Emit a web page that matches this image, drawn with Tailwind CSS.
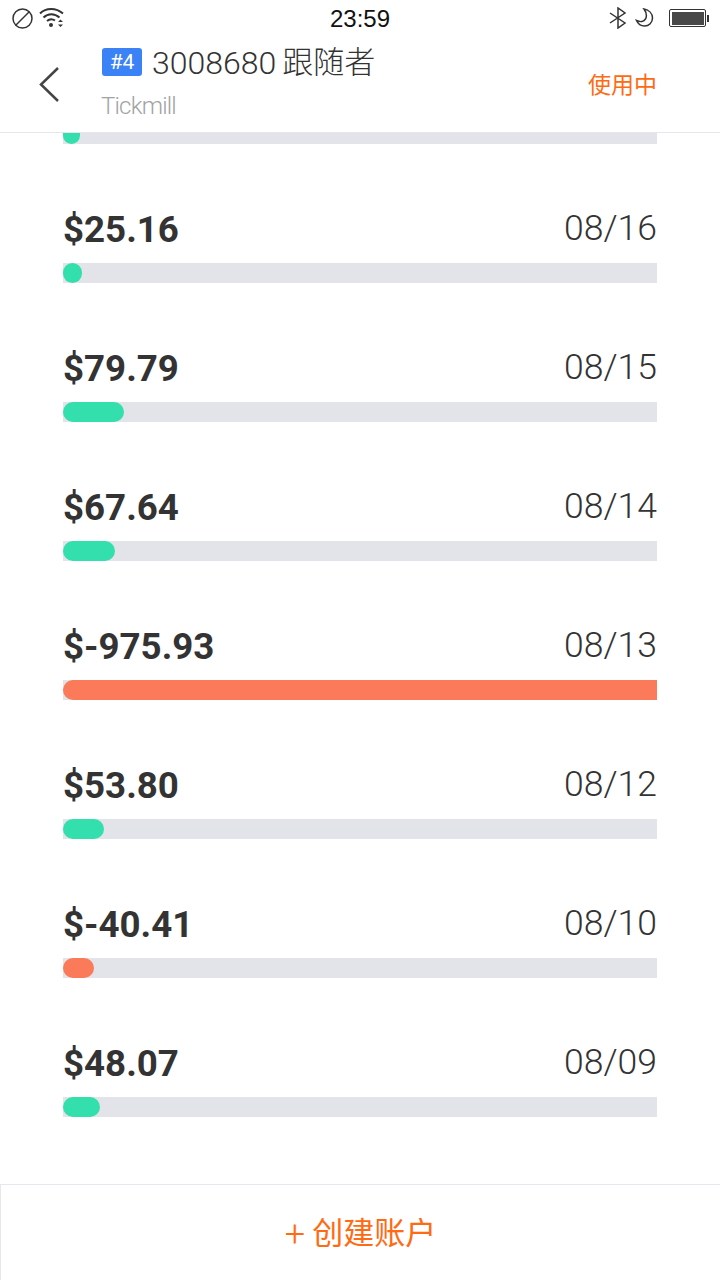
<!DOCTYPE html>
<html lang="zh">
<head>
  <meta charset="UTF-8">
  <title>账户</title>
  <script src="https://cdn.jsdelivr.net/npm/@tailwindcss/browser@4"></script>
</head>
<body class="bg-white w-[720px] h-[1280px] overflow-hidden font-['Roboto','Noto_Sans_CJK_SC',sans-serif]">
  <!-- status bar -->
  <div class="h-9 relative flex items-center justify-between pl-3 pr-[11px]">
    <div class="flex items-center gap-[6px]">
      <svg width="21" height="21" viewBox="0 0 21 21" fill="none" stroke="#333" stroke-width="1.5"><circle cx="10.5" cy="10.5" r="9.5"/><path d="M4 17 17 4"/></svg>
      <svg width="25" height="20" viewBox="0 0 25 20" fill="none" stroke="#333" stroke-width="2"><path d="M1 5.500C7-.5 17-.5 24 5.500"/><path d="M4.500 9.500C9 5 15.500 5 20.500 9.500"/><path d="M8 13C10.500 10.800 13.500 10.800 16 12.500"/><circle cx="12" cy="17" r="2" fill="#333" stroke="none"/><path d="M21.500 11.500l-2.500 2.500h5zM21.500 19l-2.500-2.500h5z" fill="#333" stroke="none"/></svg>
    </div>
    <span class="absolute left-[330px] top-[3px] text-[24px] leading-[32px] text-[#111] font-['Liberation_Sans']">23:59</span>
    <div class="flex items-center">
      <svg width="18" height="22" viewBox="0 0 18 22" fill="none" stroke="#333" stroke-width="1.5"><path d="M1 6l15 10-7 5V1l7 5L1 16"/></svg>
      <svg class="ml-[7px]" width="20" height="20" viewBox="0 0 20 20" fill="none" stroke="#333" stroke-width="1.500"><path d="M10 1c5 1 8.500 4.500 8.500 9 0 4.500-3.500 8-8 8-3.500 0-6.500-2-8-5.500 4 2 7.500 1 9-1.500 1.500-3 1-6.500-1.500-10z"/></svg>
      <div class="ml-[15px] w-[37px] h-[18px] border-[1.5px] border-[#333] rounded-[2px] p-[1.5px]"><div class="w-full h-full bg-[#484848]"></div></div>
      <div class="ml-[1px] w-[2px] h-[7px] bg-[#333]"></div>
    </div>
  </div>

  <!-- header -->
  <div class="h-[97px] border-b border-[#e6e6ec] flex">
    <div class="w-[102px] pl-[39px] pt-[30px]">
      <svg width="21" height="37" viewBox="0 0 21 37" fill="none" stroke="#444" stroke-width="2.500"><path d="M19 2 2 18.500 19 35"/></svg>
    </div>
    <div class="flex-1 pt-[12px]">
      <div class="flex items-center h-[28px]">
        <span class="w-10 h-7 rounded-[3px] bg-[#3b82f6] text-white text-[21px] text-center leading-[29px]">#4</span>
        <span class="ml-[10px] mt-[2px] text-[32px] font-light text-[#333] leading-[28px]">3008680</span>
        <span class="ml-[6px] mt-[2px] text-[31px] font-light text-[#333] leading-[28px]">跟随者</span>
      </div>
      <div class="-ml-[1px] mt-[16px] text-[24px] tracking-[-0.8px] leading-[28px] text-[#a3a3a3] font-light">Tickmill</div>
    </div>
    <div class="pr-[63px] pt-[33px] text-[23px] leading-[34px] text-[#ff6a13]">使用中</div>
  </div>

  <!-- list -->
  <div class="h-[1051px] overflow-hidden">
    <div class="h-[47px] px-[63px] overflow-hidden">
      <div class="h-5 -mt-[9px] bg-[#e3e4e9]"><div class="h-5 w-[17px] rounded-full bg-[#33dfac]"></div></div>
    </div>

    <div class="h-[139px] px-[63px] pt-[28px]">
      <div class="flex justify-between items-center h-[42px] mb-[13px]">
        <span class="text-[36.7px] font-bold text-[#333] translate-y-[1px]">$25.16</span>
        <span class="text-[35.5px] font-light text-[#333]">08/16</span>
      </div>
      <div class="h-5 bg-[#e3e4e9]"><div class="h-5 w-[19px] rounded-full bg-[#33dfac]"></div></div>
    </div>
    <div class="h-[139px] px-[63px] pt-[28px]">
      <div class="flex justify-between items-center h-[42px] mb-[13px]">
        <span class="text-[36.7px] font-bold text-[#333] translate-y-[1px]">$79.79</span>
        <span class="text-[35.5px] font-light text-[#333]">08/15</span>
      </div>
      <div class="h-5 bg-[#e3e4e9]"><div class="h-5 w-[61px] rounded-full bg-[#33dfac]"></div></div>
    </div>
    <div class="h-[139px] px-[63px] pt-[28px]">
      <div class="flex justify-between items-center h-[42px] mb-[13px]">
        <span class="text-[36.7px] font-bold text-[#333] translate-y-[1px]">$67.64</span>
        <span class="text-[35.5px] font-light text-[#333]">08/14</span>
      </div>
      <div class="h-5 bg-[#e3e4e9]"><div class="h-5 w-[52px] rounded-full bg-[#33dfac]"></div></div>
    </div>
    <div class="h-[139px] px-[63px] pt-[28px]">
      <div class="flex justify-between items-center h-[42px] mb-[13px]">
        <span class="text-[36.7px] font-bold text-[#333] translate-y-[1px]">$-975.93</span>
        <span class="text-[35.5px] font-light text-[#333]">08/13</span>
      </div>
      <div class="h-5 bg-[#e3e4e9]"><div class="h-5 w-full rounded-l-full bg-[#fa7a5a]"></div></div>
    </div>
    <div class="h-[139px] px-[63px] pt-[28px]">
      <div class="flex justify-between items-center h-[42px] mb-[13px]">
        <span class="text-[36.7px] font-bold text-[#333] translate-y-[1px]">$53.80</span>
        <span class="text-[35.5px] font-light text-[#333]">08/12</span>
      </div>
      <div class="h-5 bg-[#e3e4e9]"><div class="h-5 w-[41px] rounded-full bg-[#33dfac]"></div></div>
    </div>
    <div class="h-[139px] px-[63px] pt-[28px]">
      <div class="flex justify-between items-center h-[42px] mb-[13px]">
        <span class="text-[36.7px] font-bold text-[#333] translate-y-[1px]">$-40.41</span>
        <span class="text-[35.5px] font-light text-[#333]">08/10</span>
      </div>
      <div class="h-5 bg-[#e3e4e9]"><div class="h-5 w-[31px] rounded-full bg-[#fa7a5a]"></div></div>
    </div>
    <div class="h-[139px] px-[63px] pt-[28px]">
      <div class="flex justify-between items-center h-[42px] mb-[13px]">
        <span class="text-[36.7px] font-bold text-[#333] translate-y-[1px]">$48.07</span>
        <span class="text-[35.5px] font-light text-[#333]">08/09</span>
      </div>
      <div class="h-5 bg-[#e3e4e9]"><div class="h-5 w-[37px] rounded-full bg-[#33dfac]"></div></div>
    </div>
  </div>

  <!-- footer -->
  <div class="h-[96px] border-t border-l border-[#e6e6ec] flex items-center justify-center gap-[7px] text-[#ff6a13] text-[31px] bg-white">
    <span class="text-[36px] font-light leading-none translate-y-[1px]">+</span>
    <span class="translate-y-[2px]">创建账户</span>
  </div>
</body>
</html>
